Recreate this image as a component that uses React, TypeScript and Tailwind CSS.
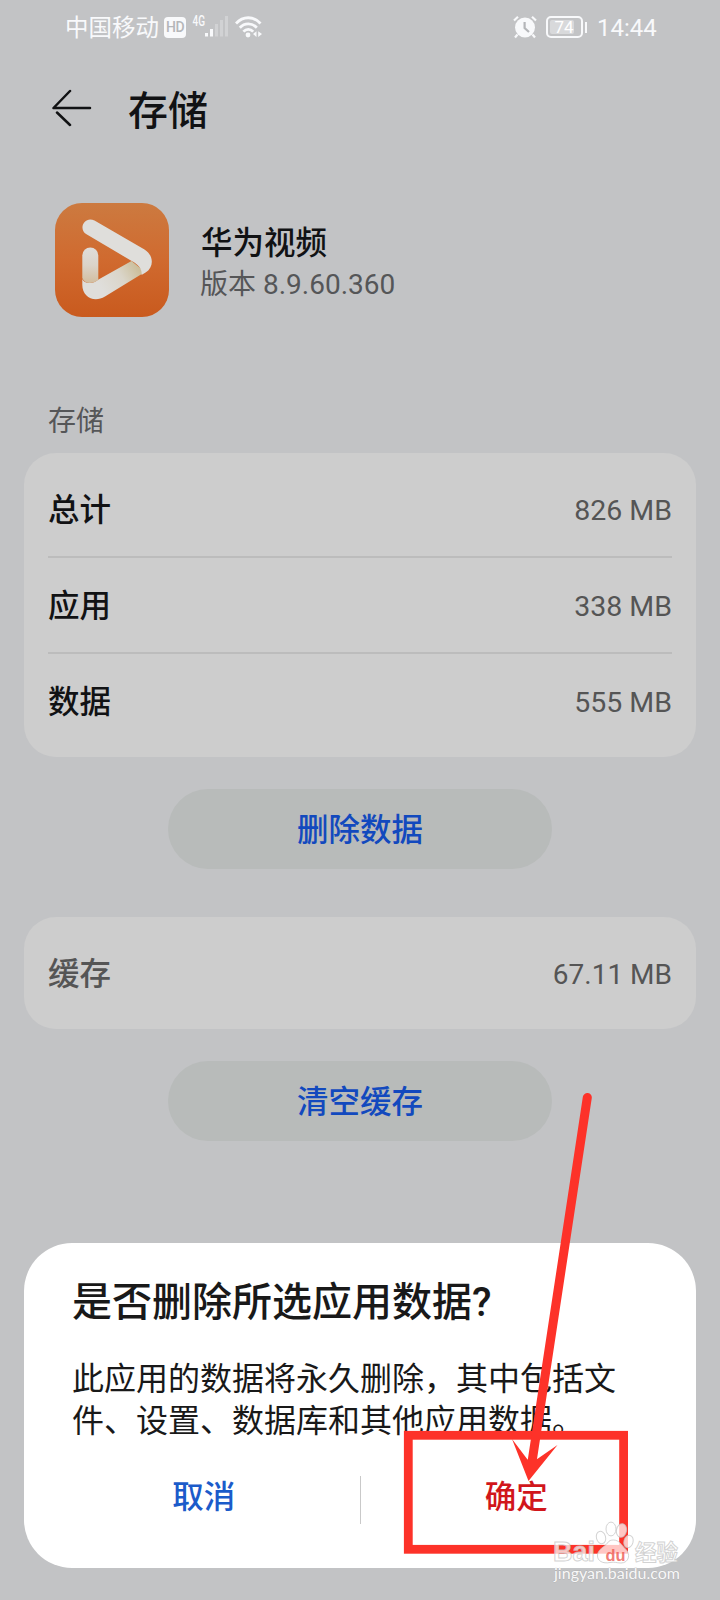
import type { ReactNode } from 'react';

const usage = [
  { label: '总计', value: '826 MB' },
  { label: '应用', value: '338 MB' },
  { label: '数据', value: '555 MB' },
];

function StatusBar() {
  return (
    <div className="flex h-[54px] items-center pl-[65px] pr-[63px] text-2xl text-[#f8f9fb]">
      <span className="w-[97px] pt-1 text-[23.5px]">中国移动</span>
      <span className="ml-[2px] flex h-[21px] w-[22px] items-center justify-center rounded-[4px] bg-[#f8f9fb] text-[14px] font-medium tracking-[-0.5px] text-[#b4b6b9]">HD</span>
      <svg className="ml-[6px]" width="38" height="26" viewBox="0 0 38 26">
        <text x="0.5" y="11.5" fontSize="14" fontWeight="500" textLength="12.5" lengthAdjust="spacingAndGlyphs" fill="#f8f9fb">4G</text>
        <g strokeWidth="3">
          <path d="M14.5 22.5V19" stroke="#f8f9fb" />
          <path d="M19.5 22.5V15" stroke="#f8f9fb" />
          <path d="M24.5 22.5V10M29.5 22.5V6M34.5 22.5V2" stroke="#d1d2d4" />
        </g>
      </svg>
      <svg className="ml-[5px]" width="28" height="24" viewBox="0 0 28 24" fill="none" stroke="#f8f9fb" strokeWidth="2.8">
        <path d="M1 8.5C8 0.8 18.5 0.8 25.5 8.5" />
        <path d="M4.8 12.7C9.5 7.6 17 7.6 21.8 12.7" />
        <path d="M8.4 16.6C11.2 13.6 15.4 13.6 18.2 16.6" />
        <circle cx="13" cy="20" r="2.4" fill="#f8f9fb" stroke="none" />
        <path d="M21.5 16.2V22L18 19.1ZM23.2 16.2V22L27 19.1Z" fill="#f8f9fb" stroke="none" />
      </svg>
      <svg className="ml-auto" width="24" height="24" viewBox="0 0 24 24" fill="none">
        <circle cx="12" cy="12.5" r="10" fill="#f8f9fb" />
        <path d="M1 5.5L5 1.8M23 5.5L19 1.8M4.5 19.5L2 22.5M19.5 19.5L22 22.5" stroke="#f8f9fb" strokeWidth="2.2" />
        <path d="M11.6 7V13L16 17" stroke="#b4b6b9" strokeWidth="2.2" />
      </svg>
      <span className="ml-[9px] flex h-[22px] w-[37px] rounded-[5px] border-2 border-[#f8f9fb] p-[2px]">
        <span className="flex w-6 items-center justify-center rounded-[2px] bg-[#d8d9db] pl-1 text-[17px] leading-none text-white">74</span>
      </span>
      <span className="ml-[2px] h-[11px] w-[2px] bg-[#f8f9fb]" />
      <span className="ml-[10px] w-[60px] pt-[2px] text-[24px]">14:44</span>
    </div>
  );
}

function VideoIcon() {
  return (
    <svg width="114" height="114" viewBox="0 0 114 114" fill="none">
      <defs>
        <linearGradient id="tile" x1="0" y1="0" x2="0" y2="1">
          <stop offset="0" stopColor="#cc7a40" />
          <stop offset="0.5" stopColor="#d06a2f" />
          <stop offset="1" stopColor="#c95a1e" />
        </linearGradient>
        <linearGradient id="stem" gradientUnits="userSpaceOnUse" x1="35" y1="44" x2="35" y2="80">
          <stop offset="0" stopColor="#dfdedb" />
          <stop offset="0.5" stopColor="#dbd3c9" />
          <stop offset="1" stopColor="#d2bd9f" />
        </linearGradient>
        <linearGradient id="base" gradientUnits="userSpaceOnUse" x1="48" y1="88" x2="88" y2="64">
          <stop offset="0" stopColor="#dfdedb" />
          <stop offset="0.5" stopColor="#dad5c9" />
          <stop offset="1" stopColor="#c8b990" />
        </linearGradient>
      </defs>
      <rect width="114" height="114" rx="27" fill="url(#tile)" />
      <path d="M27.3 76C29 80.5 37 82 43.5 76.6L76.5 58L90 69L50 93.5C39 100 27.3 94 27.3 82Z" fill="url(#base)" />
      <path d="M27.3 52.5A8 8 0 0 1 43.3 52.5V76.7C37 81.5 29.5 81 27.3 75Z" fill="url(#stem)" />
      <path d="M39.5 17.5L89.5 46.5C99 52.5 99 64 91 69.2L86.5 72C87.5 67 84 61.8 76.7 58L31.5 31.3C22.5 25.5 30 12.5 39.5 17.5Z" fill="#dfdedb" />
    </svg>
  );
}

function Card({ children }: { children: ReactNode }) {
  return <div className="mx-6 rounded-[32px] bg-[#cdcdcd] px-6 pb-[7px] pt-[9px]">{children}</div>;
}

function PillButton({ children }: { children: ReactNode }) {
  return (
    <button className="mx-auto mt-8 flex h-20 w-96 items-center justify-center rounded-full bg-[#b8bbba] pt-[3px] text-[31.5px] font-medium text-[#1249be]">
      {children}
    </button>
  );
}

function ConfirmDialog() {
  return (
    <div className="absolute inset-x-6 top-[1243px] flex h-[325px] flex-col rounded-[48px] bg-white px-12 text-[#191919]">
      <h2 className="mt-9 text-[40px] font-medium leading-[48px]">是否删除所选应用数据?</h2>
      <p className="mt-[31px] whitespace-nowrap text-[32px] leading-[42px]">
        此应用的数据将永久删除，其中包括文
        <br />
        件、设置、数据库和其他应用数据。
      </p>
      <div className="-mx-6 mt-[34px] flex h-12 items-center text-[31.5px] font-medium">
        <button className="flex-1 pb-[5px] text-center text-[#1b5bca]">取消</button>
        <span className="h-12 w-px bg-[#c9c9c9]" />
        <button className="flex-1 pb-[5px] text-center text-[#d1161b]">确定</button>
      </div>
    </div>
  );
}

function Annotation() {
  return (
    <svg className="pointer-events-none absolute inset-0" width="720" height="1600" viewBox="0 0 720 1600" fill="none">
      <rect x="408.3" y="1435.3" width="215.3" height="114" stroke="#fd3229" strokeWidth="8.8" />
      <path d="M587.3 1097.5L532 1462" stroke="#fd3229" strokeWidth="9" strokeLinecap="round" />
      <path d="M512 1439L527.5 1459.5H536.5L557.5 1445L528.5 1481Z" fill="#fd3229" />
    </svg>
  );
}

function Watermark() {
  return (
    <svg className="pointer-events-none absolute left-[548px] top-[1518px]" width="140" height="72" viewBox="0 0 140 72">
      <g fill="#fff" fillOpacity="0.72" stroke="#c4c4c4" strokeOpacity="0.75" strokeWidth="1">
        <text x="5" y="43" fontSize="27" fontWeight="700" textLength="42" lengthAdjust="spacingAndGlyphs" fontFamily="Liberation Sans, sans-serif">Bai</text>
        <ellipse cx="53" cy="19.5" rx="4.6" ry="6.3" transform="rotate(-15 53 19.5)" />
        <ellipse cx="63" cy="11" rx="5" ry="6.9" />
        <ellipse cx="73.5" cy="12.5" rx="5" ry="6.9" transform="rotate(12 73.5 12.5)" />
        <ellipse cx="80.5" cy="23.5" rx="4.6" ry="6.3" transform="rotate(15 80.5 23.5)" />
        <path d="M65.5 22C71 22 73.5 27 77.5 31C83 36 81 45 73 45C68 45 67 43.5 62 44.5C55 46 49 43 49.5 37C50 31 56.5 29 59.5 25C61 22.5 63 22 65.5 22Z" />
        <text x="87" y="41.5" fontSize="22" fontWeight="700" textLength="43" lengthAdjust="spacingAndGlyphs">经验</text>
      </g>
      <text x="57.5" y="42.5" fontSize="17" fontWeight="700" fill="#ee5850" fillOpacity="0.8" textLength="20" lengthAdjust="spacingAndGlyphs" fontFamily="Liberation Sans, sans-serif">du</text>
      <text x="6" y="61" fontSize="15.5" fill="#fff" fillOpacity="0.92" stroke="#999" strokeOpacity="0.4" strokeWidth="0.8" paintOrder="stroke" textLength="126" lengthAdjust="spacingAndGlyphs" fontFamily="Lato, sans-serif">jingyan.baidu.com</text>
    </svg>
  );
}

export default function App() {
  return (
    <div className="relative h-[1600px] w-[720px] overflow-hidden bg-[#c2c3c5] font-['Roboto','Noto_Sans_CJK_SC',sans-serif] text-[#111214]">
      <StatusBar />

      <header className="flex h-[108px] items-center pl-[52px]">
        <svg width="40" height="38" viewBox="0 0 40 38" fill="none" stroke="#111214" strokeWidth="2.5" strokeLinecap="round" strokeLinejoin="round">
          <path d="M18 2L1.5 19H38M5 23.5L18 36" />
        </svg>
        <h1 className="ml-9 pt-[7px] text-[40px] font-medium leading-none">存储</h1>
      </header>

      <section className="mt-[41px] flex h-[114px] pl-[55px]">
        <VideoIcon />
        <div className="ml-8 pt-5">
          <div className="text-[31.5px] font-medium leading-[42px]">华为视频</div>
          <div className="-ml-px text-[28px] leading-[40px] text-[#555658]">版本 8.9.60.360</div>
        </div>
      </section>

      <div className="mb-3 mt-[85px] pl-12 text-[28px] leading-[39px] text-[#555658]">存储</div>

      <Card>
        {usage.map((row) => (
          <div key={row.label} className="flex h-24 items-center justify-between border-b-2 border-[#bcbcbc] pt-1 last:border-transparent">
            <span className="text-[31.5px] font-medium">{row.label}</span>
            <span className="text-[28.5px] text-[#555]">{row.value}</span>
          </div>
        ))}
      </Card>
      <PillButton>删除数据</PillButton>

      <div className="h-12" />
      <Card>
        <div className="flex h-24 items-center justify-between pt-[2px] text-[#555]">
          <span className="text-[31.5px] font-medium">缓存</span>
          <span className="text-[28px]">67.11 MB</span>
        </div>
      </Card>
      <PillButton>清空缓存</PillButton>

      <ConfirmDialog />
      <Annotation />
      <Watermark />
    </div>
  );
}
